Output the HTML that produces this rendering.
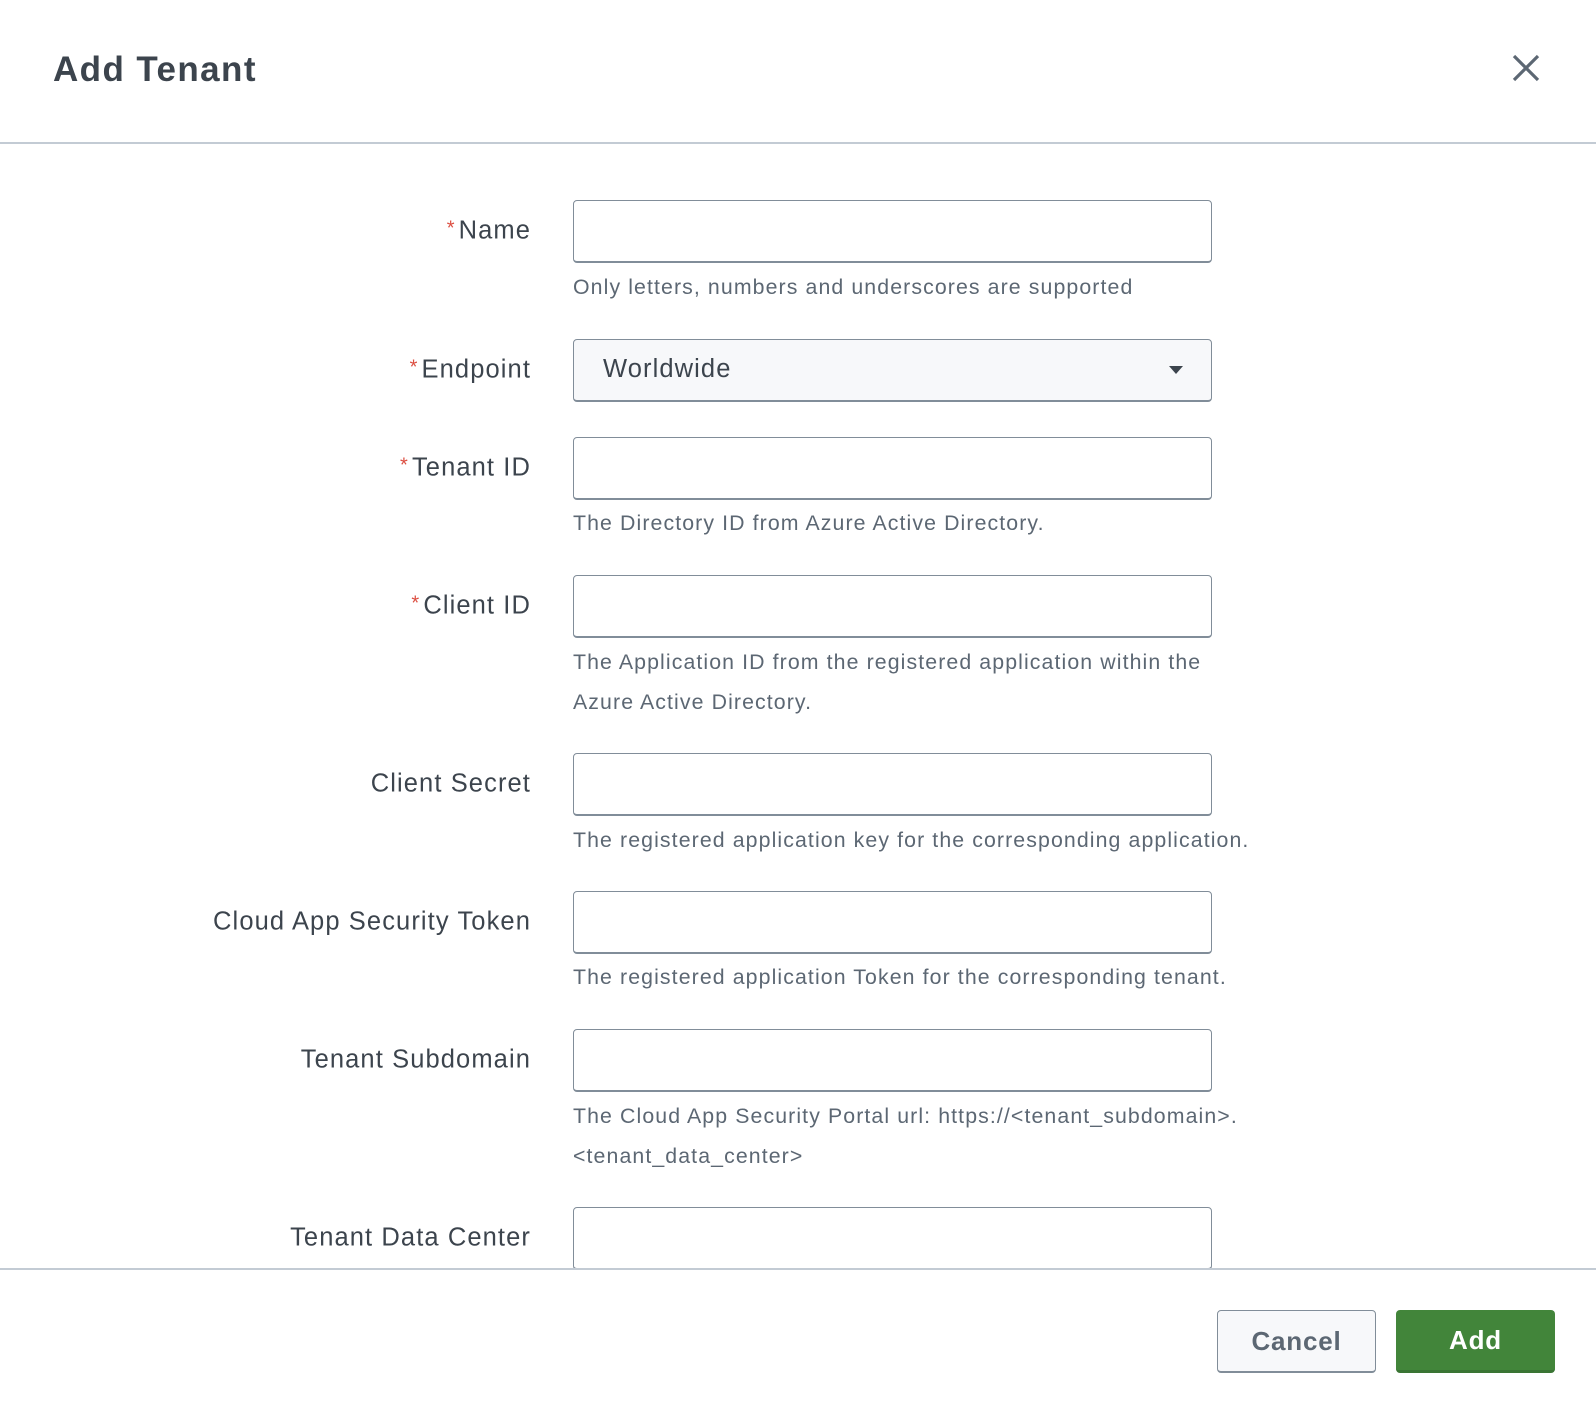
<!DOCTYPE html>
<html><head><meta charset="utf-8"><style>
*{box-sizing:border-box;margin:0;padding:0}
body{width:1596px;height:1410px;background:#fff;font-family:"Liberation Sans",sans-serif;position:relative;overflow:hidden;color:#3c444d}
.t{position:absolute;left:53px;top:50px;font-size:35px;font-weight:bold;color:#3c444d;letter-spacing:1.4px}
.x{position:absolute;left:1512px;top:54px}
.hr{position:absolute;left:0;width:1596px;height:2px;background:#c3cbd4}
.lab{position:absolute;right:1065px;font-size:25.5px;color:#3c444d;white-space:nowrap;transform:translateY(-50%);letter-spacing:1.1px}
.lab b{color:#dc4e41;font-weight:normal;font-size:20px;vertical-align:4px;margin-right:3px}
.in{position:absolute;left:573px;width:639px;height:63px;border:1px solid #818d99;border-bottom:2px solid #818d99;border-radius:4px;background:#fff}
.sel{background:#f7f8fa;font-size:25.5px;color:#3c444d;padding:15px 0 0 29px;letter-spacing:1.1px}
.h{position:absolute;left:573px;font-size:21.3px;color:#5c6773;line-height:40px;white-space:nowrap;letter-spacing:1.1px}
.btn{position:absolute;top:1310px;height:63px;width:159px;border-radius:4px;font-size:26px;font-weight:bold;text-align:center;line-height:60px;letter-spacing:0.8px}
</style></head><body>
<div class="t">Add Tenant</div>
<svg class="x" width="28" height="28" viewBox="0 0 28 28"><path d="M2 2L26 26M26 2L2 26" stroke="#5c6773" stroke-width="3.2"/></svg>
<div class="hr" style="top:142px"></div>

<div class="lab" style="top:231px"><b>*</b>Name</div>
<div class="in" style="top:200px"></div>
<div class="h" style="top:267px">Only letters, numbers and underscores are supported</div>

<div class="lab" style="top:370px"><b>*</b>Endpoint</div>
<div class="in sel" style="top:339px">Worldwide<svg style="position:absolute;right:28px;top:26px" width="14" height="8"><path d="M0 0H14L7 8Z" fill="#3c444d"/></svg></div>

<div class="lab" style="top:468px"><b>*</b>Tenant ID</div>
<div class="in" style="top:437px"></div>
<div class="h" style="top:503px">The Directory ID from Azure Active Directory.</div>

<div class="lab" style="top:606px"><b>*</b>Client ID</div>
<div class="in" style="top:575px"></div>
<div class="h" style="top:642px">The Application ID from the registered application within the<br>Azure Active Directory.</div>

<div class="lab" style="top:784px">Client Secret</div>
<div class="in" style="top:753px"></div>
<div class="h" style="top:820px">The registered application key for the corresponding application.</div>

<div class="lab" style="top:922px">Cloud App Security Token</div>
<div class="in" style="top:891px"></div>
<div class="h" style="top:957px">The registered application Token for the corresponding tenant.</div>

<div class="lab" style="top:1060px">Tenant Subdomain</div>
<div class="in" style="top:1029px"></div>
<div class="h" style="top:1096px">The Cloud App Security Portal url: https://&lt;tenant_subdomain&gt;.<br>&lt;tenant_data_center&gt;</div>

<div class="lab" style="top:1238px">Tenant Data Center</div>
<div class="in" style="top:1207px"></div>
<div style="position:absolute;left:0;top:1270px;width:1596px;height:140px;background:#fff"></div>
<div class="hr" style="top:1268px"></div>

<div class="btn" style="left:1217px;background:#f7f8fa;border:1px solid #818d99;border-bottom:2px solid #818d99;color:#5c6773">Cancel</div>
<div class="btn" style="left:1396px;background:#42853a;border-bottom:3px solid #3a7534;color:#fff">Add</div>
</body></html>
